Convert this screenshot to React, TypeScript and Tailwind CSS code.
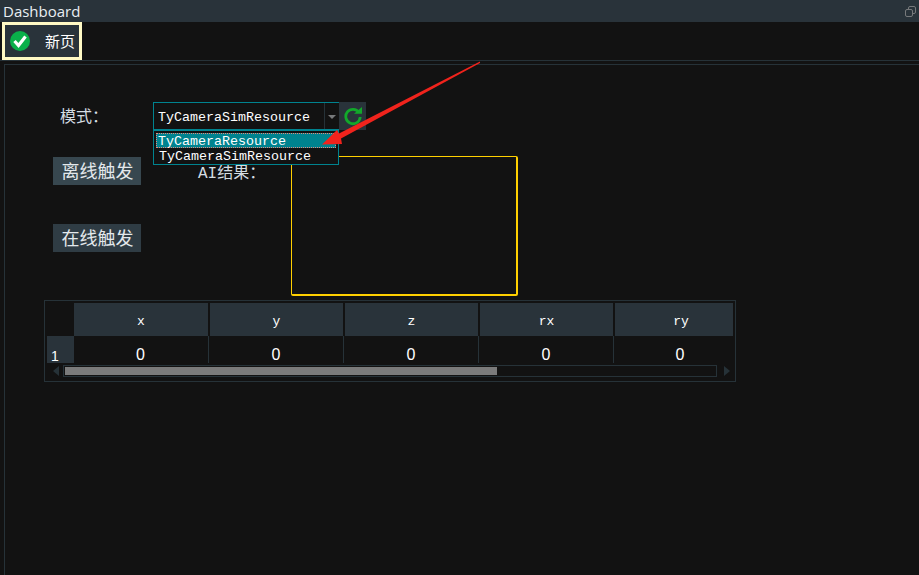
const mono = 'font-["Liberation_Mono","Noto_Sans_CJK_SC",monospace]'
const columns = ['x', 'y', 'z', 'rx', 'ry']

function CheckBadge() {
  return (
    <svg width="20" height="20" viewBox="0 0 20 20">
      <circle cx="10" cy="10" r="10" fill="#0ab04a" />
      <path d="M4.5 10 L8.5 14.5 L15.5 5.5" fill="none" stroke="#fff" strokeWidth="3.2" />
    </svg>
  )
}

function RefreshIcon() {
  return (
    <svg width="20" height="20" viewBox="0 0 20 20">
      <path d="M16 6.5 A7.2 7.2 0 1 0 17.2 11" fill="none" stroke="#12a82a" strokeWidth="2.8" />
      <path d="M11 7.8 L19 7.8 L19 1 Z" fill="#12a82a" />
    </svg>
  )
}

function RestoreIcon() {
  return (
    <svg width="11" height="11" viewBox="0 0 11 11" fill="none" stroke="#77797b" strokeWidth="1">
      <rect x="3.5" y="0.5" width="7" height="7" rx="1.5" />
      <rect x="0.5" y="3.5" width="7" height="7" rx="1.5" fill="#29333a" />
    </svg>
  )
}

function DataTable() {
  return (
    <div className="ml-[39px] mt-[4px] h-[82px] w-[692px] border border-[#263238] pl-[2px] pt-[2px]">
      <div className="grid grid-cols-[27px_136px_135px_135px_135px_118px]">
        <div className="h-[33px]" />
        {columns.map((name, i) => (
          <div
            key={name}
            className={`flex h-[33px] items-center justify-center bg-[#29333a] pt-[4px] text-[13px] text-white ${mono} ${i < 4 ? 'border-r-2 border-[#121212]' : 'pl-[14px]'}`}
          >
            {name}
          </div>
        ))}
        <div className="flex h-[27px] items-end bg-[#29333a] pl-[4px] text-[14px] leading-[14px] text-white font-['Liberation_Sans',sans-serif]">
          1
        </div>
        {columns.map((name, i) => (
          <div
            key={name}
            className={`flex h-[27px] items-center justify-center pt-[10px] text-[16px] text-white font-['Liberation_Sans',sans-serif] ${i < 4 ? 'mr-[1px] border-r border-[#263238] pr-[1px]' : 'pl-[12px]'}`}
          >
            0
          </div>
        ))}
      </div>
      <div className="mt-[2px] flex h-[12px] items-center">
        <div className="ml-[6px] h-0 w-0 border-y-[5px] border-r-[6px] border-y-transparent border-r-[#263238]" />
        <div className="ml-[4px] h-[12px] w-[654px] border border-[#263238] p-[1px]">
          <div className="h-full w-[432px] bg-[#7b7b7b]" />
        </div>
        <div className="ml-[7px] h-0 w-0 border-y-[5px] border-l-[6px] border-y-transparent border-l-[#263238]" />
      </div>
    </div>
  )
}

export default function App() {
  return (
    <div className="relative h-screen overflow-hidden bg-[#121212] font-['Noto_Sans_CJK_SC',sans-serif]">
      <div className="flex h-[22px] items-center justify-between bg-[#29333a] pl-[3px] pr-[3px]">
        <span className="text-[15px] leading-[22px] text-[#e8eef2] font-['Open_Sans',sans-serif]">Dashboard</span>
        <RestoreIcon />
      </div>

      <div className="h-[39px] border-b border-[#263238] pl-[2px]">
        <div className="flex h-[38px] w-[80px] items-center border-[3px] border-[#fff9c4] bg-[#29333a] pl-[5px]">
          <CheckBadge />
          <span className="ml-[15px] text-[15px] text-white">新页</span>
        </div>
      </div>

      <div className="ml-[4px] mt-[3px] h-[511px] border-l border-t border-[#263238]">
        <div className="ml-[55px] mt-[37px] flex h-[28px]">
          <div className={`flex w-[93px] items-center pt-[4px] text-[16px] text-[#d5dde2] ${mono}`}>模式：</div>
          <div className={`flex h-[28px] w-[186px] border border-r-0 border-[#00838f] text-[13.33px] text-white ${mono}`}>
            <span className="flex w-[171px] items-center border-r border-[#263238] pl-[4px] pt-[3px]">TyCameraSimResource</span>
            <span className="ml-[3px] mt-[12px] h-0 w-0 border-x-[4px] border-t-[4px] border-x-transparent border-t-[#77797b]" />
          </div>
          <div className="flex h-[28px] w-[27px] items-center justify-center bg-[#29333a]">
            <RefreshIcon />
          </div>
        </div>

        <div className="ml-[48px] mt-[26px] flex">
          <div className="flex flex-col gap-[39px] pt-[1px]">
            <button className="h-[28px] w-[88px] bg-[#37474f] pb-[2px] pl-[1px] text-[18px] text-[#e3e8eb]">离线触发</button>
            <button className="h-[28px] w-[88px] bg-[#2f3c44] pb-[2px] pl-[1px] text-[18px] text-[#e3e8eb]">在线触发</button>
          </div>
          <div className={`ml-[57px] mt-[8px] w-[93px] text-[16px] leading-[20px] text-[#d5dde2] ${mono}`}>AI结果：</div>
          <div className="h-[140px] w-[227px] rounded-[2px] border border-b-2 border-r-2 border-[#ffd000]" />
        </div>

        <DataTable />
      </div>

      {/* open combo list and the annotation arrow sit over the page */}
      <div className={`absolute left-[153px] top-[130px] h-[35px] w-[186px] border border-[#00838f] bg-[#121212] pl-[2px] pr-[2px] pt-[2px] text-[13.33px] leading-[17px] text-white ${mono}`}>
        <div className="h-[15px] bg-[#00838f] pl-[2px] outline-1 outline-dotted -outline-offset-1 outline-[#e08a80]">TyCameraResource</div>
        <div className="h-[15px] pl-[3px]">TyCameraSimResource</div>
      </div>
      <svg className="absolute left-0 top-0" width="919" height="575">
        <polygon points="480,61.5 339,133.5 337,130 322,144.5 342,144 341,138.5 480,63" fill="#f0231c" />
      </svg>
    </div>
  )
}
